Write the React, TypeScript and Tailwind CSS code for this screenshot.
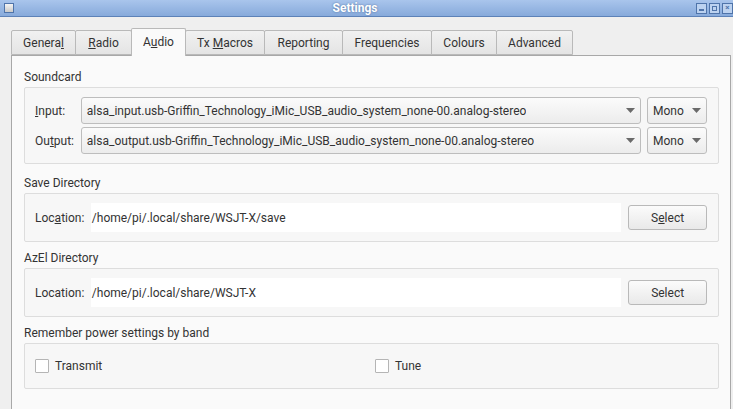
import React from "react";

const tabs = ["General", "Radio", "Audio", "Tx Macros", "Reporting", "Frequencies", "Colours", "Advanced"];
const tabWidths = ["w-[65px]", "w-[57px]", "w-[55px]", "w-[80px]", "w-[79px]", "w-[90px]", "w-[66px]", "w-[77px]"];

function Arrow() {
    return (
        <svg width="9" height="5" viewBox="0 0 9 5" className="shrink-0">
            <path d="M0 0 L9 0 L4.5 5 Z" fill="#6a6a6a" />
        </svg>
    );
}

function Combo({ text, w }: { text: string; w: string }) {
    return (
        <div className={`${w} h-[27px] flex items-center justify-between pl-[5px] pr-[5px] border border-[#bdbdbd] rounded-[3px] bg-gradient-to-b from-[#fbfbfb] to-[#ececec]`}>
            <span className="truncate">{text}</span>
            <Arrow />
        </div>
    );
}

function Group({ title, children, h }: any) {
    return (
        <div className="flex flex-col">
            <div className="h-[21px] pt-[2px] pl-[12px]">{title}</div>
            <div className={`ml-[12px] mr-[11px] ${h} border border-[#dddddd] rounded-[2px] bg-[#f7f7f7]`}>{children}</div>
        </div>
    );
}

function LocationRow({ path, underline }: { path: string; underline?: boolean }) {
    return (
        <div className="flex items-center h-full pl-[10px] pr-[11px]">
            <span className="w-[56px]">
                {underline ? <>Loc<u>a</u>tion:</> : "Location:"}
            </span>
            <div className="w-[532px] h-[29px] bg-white flex items-center pl-[1px]">{path}</div>
            <div className="ml-[7px] w-[79px] h-[25px] border border-[#b9b9b9] rounded-[3px] bg-gradient-to-b from-[#fbfbfb] to-[#e9e9e9] flex items-center justify-center">
                <span>{underline ? <>S<u>e</u>lect</> : "Select"}</span>
            </div>
        </div>
    );
}

function Check({ label }: { label: string }) {
    return (
        <div className="flex items-center gap-[6px]">
            <div className="w-[14px] h-[14px] border border-[#b5b5b5] bg-white rounded-[1px]" />
            <span>{label}</span>
        </div>
    );
}

export default function App() {
    return (
        <div className="w-[733px] h-[409px] overflow-hidden bg-[#efefef] text-[12px] text-[#333333] font-['Roboto','Liberation_Sans',sans-serif]">
            <div className="h-[17px] flex items-center justify-between bg-gradient-to-b from-[#a9c5ec] to-[#87aadb] border-b border-[#5d82b8]">
                <div className="ml-[4px] w-[10px] h-[10px] border border-[#4f74aa] bg-gradient-to-b from-[#f4f4f4] to-[#c9c9c9]" />
                <div className="text-white font-bold text-[12px] [text-shadow:0_0_2px_#4a6a9a]">Settings</div>
                <div className="flex gap-[2px]">
                    {["min", "max", "close"].map((k) => (
                        <div key={k} className="w-[11px] h-[11px] border border-[#4f74aa] bg-[#bcd2f0] flex items-center justify-center">
                            {k === "min" && <div className="w-[5px] h-[2px] bg-[#4f74aa] mt-[4px]" />}
                            {k === "max" && <div className="w-[5px] h-[5px] border border-[#4f74aa]" />}
                            {k === "close" && <div className="text-[8px] leading-none text-[#4f74aa] font-bold">×</div>}
                        </div>
                    ))}
                </div>
            </div>

            <div className="pt-[11px] pl-[11px] pr-[2px]">
                <div className="flex items-end h-[27px] relative z-10">
                    {tabs.map((t, i) => {
                        const active = t === "Audio";
                        return (
                            <div
                                key={t}
                                className={`${tabWidths[i]} flex items-center justify-center border border-[#b9b9b9] rounded-t-[2px] -ml-[1px] first:ml-0 ${active ? "h-[28px] bg-[#fafafa] border-b-0 -mb-[1px] pb-[2px]" : "h-[25px] bg-gradient-to-b from-[#f1f1f1] to-[#e4e4e4]"}`}
                            >
                                <span>
                                    {t === "General" && <>Genera<u>l</u></>}
                                    {t === "Radio" && <><u>R</u>adio</>}
                                    {t === "Audio" && <>A<u>u</u>dio</>}
                                    {t === "Tx Macros" && <>Tx <u>M</u>acros</>}
                                    {t === "Reporting" && <>Reportin<u>g</u></>}
                                    {!["General", "Radio", "Audio", "Tx Macros", "Reporting"].includes(t) && t}
                                </span>
                            </div>
                        );
                    })}
                </div>
                <div className="h-[360px] border border-[#a8a8a8] bg-[#fafafa] flex flex-col pt-[10px]">
                    <Group title="Soundcard" h="h-[77px]">
                        <div className="flex flex-col gap-[3px] pt-[9px] pl-[10px] pr-[11px]">
                            <div className="flex items-center">
                                <span className="w-[46px]"><u>I</u>nput:</span>
                                <Combo w="w-[562px]" text="alsa_input.usb-Griffin_Technology_iMic_USB_audio_system_none-00.analog-stereo" />
                                <div className="ml-[6px]"><Combo w="w-[60px]" text="Mono" /></div>
                            </div>
                            <div className="flex items-center">
                                <span className="w-[46px]">Ou<u>t</u>put:</span>
                                <Combo w="w-[562px]" text="alsa_output.usb-Griffin_Technology_iMic_USB_audio_system_none-00.analog-stereo" />
                                <div className="ml-[6px]"><Combo w="w-[60px]" text="Mono" /></div>
                            </div>
                        </div>
                    </Group>
                    <div className="h-[8px]" />
                    <Group title="Save Directory" h="h-[49px]">
                        <LocationRow path="/home/pi/.local/share/WSJT-X/save" underline />
                    </Group>
                    <div className="h-[5px]" />
                    <Group title="AzEl Directory" h="h-[49px]">
                        <LocationRow path="/home/pi/.local/share/WSJT-X" />
                    </Group>
                    <div className="h-[5px]" />
                    <Group title="Remember power settings by band" h="h-[46px]">
                        <div className="flex items-center h-full pl-[10px]">
                            <div className="w-[340px]"><Check label="Transmit" /></div>
                            <Check label="Tune" />
                        </div>
                    </Group>
                </div>
            </div>
        </div>
    );
}
